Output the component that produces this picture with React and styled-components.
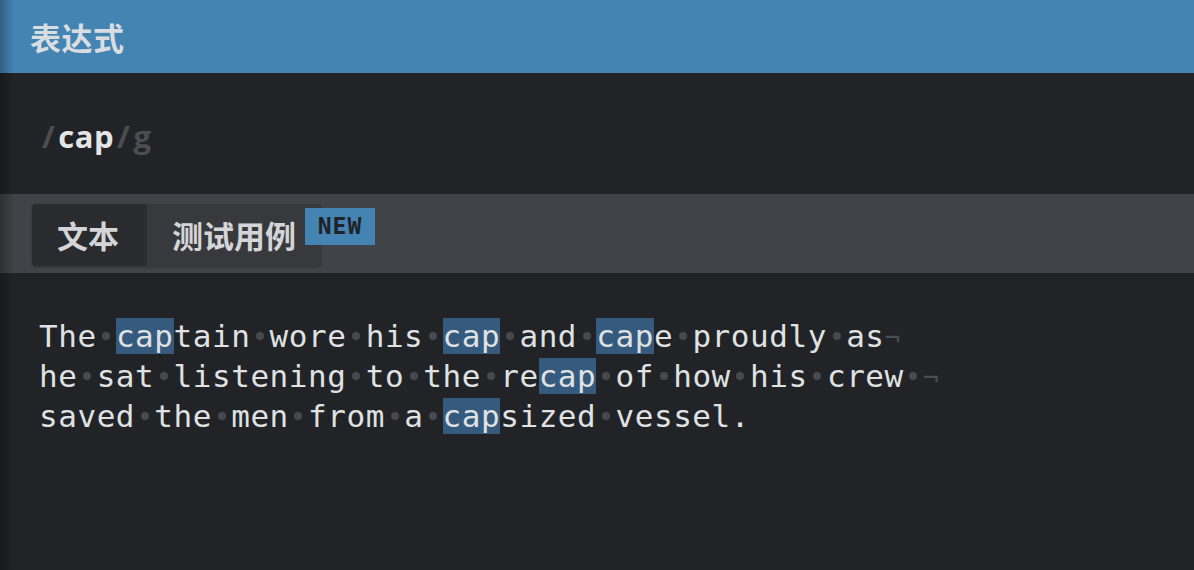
import { Fragment } from "react";
import styled, { createGlobalStyle } from "styled-components";

const GlobalStyle = createGlobalStyle`
  html, body {
    margin: 0;
    padding: 0;
    background: #222326;
  }
`;

const Page = styled.div`
  position: relative;
  width: 1194px;
  height: 570px;
  overflow: hidden;
  display: flex;
  flex-direction: column;
  background: #222326;
  font-family: "Open Sans", "Noto Sans CJK SC", sans-serif;

  /* dark shading along the left edge */
  &::before {
    content: "";
    position: absolute;
    left: 0;
    top: 0;
    bottom: 0;
    width: 14px;
    background: linear-gradient(to right, rgba(0, 0, 0, 0.28), rgba(0, 0, 0, 0));
    pointer-events: none;
    z-index: 5;
  }
`;

const Header = styled.header`
  height: 73px;
  flex-shrink: 0;
  display: flex;
  align-items: center;
  padding-left: 30px;
  background: #4484b2;
  color: #d9dde1;
  font-family: "Noto Sans CJK SC", sans-serif;
  font-size: 31px;
  font-weight: 700;
  letter-spacing: 0.5px;
`;

const Expression = styled.div`
  height: 121px;
  flex-shrink: 0;
  display: flex;
  align-items: center;
  padding-left: 39px;
  padding-top: 4px;
  box-sizing: border-box;
  font-family: "Open Sans", sans-serif;
  font-size: 31px;
  font-weight: 700;
  letter-spacing: 0.5px;
  color: #e4e5e7;
`;

const Delim = styled.span`
  color: #4a4d51;
  margin: 0 ${(p) => p.$gap || 0}px;
`;

const TabBar = styled.div`
  height: 79px;
  flex-shrink: 0;
  display: flex;
  align-items: center;
  padding-left: 32px;
  background: #404347;
`;

const TabGroup = styled.div`
  display: flex;
  height: 62px;
  margin-top: 2px;
  border-radius: 4px;
  background: #2a2b2e;
  box-shadow: 0 1px 3px rgba(0, 0, 0, 0.25);
`;

const Tab = styled.div`
  position: relative;
  display: flex;
  align-items: center;
  padding: 0 25px;
  font-family: "Noto Sans CJK SC", sans-serif;
  font-size: 31px;
  font-weight: 700;
  color: #d3d5d8;
  background: ${(p) => (p.$active ? "#2a2b2e" : "#38393d")};
  border-left: ${(p) => (p.$active ? "none" : "3px solid #2c2d30")};
  border-radius: ${(p) => (p.$active ? "4px 0 0 4px" : "0 4px 4px 0")};
`;

const Badge = styled.span`
  position: absolute;
  top: 4px;
  right: -54px;
  width: 70px;
  height: 37px;
  display: flex;
  align-items: center;
  justify-content: center;
  background: #4484b2;
  color: #1f2226;
  font-family: "DejaVu Sans Mono", monospace;
  font-size: 23px;
  font-weight: 700;
  letter-spacing: 1px;
`;

const Editor = styled.div`
  flex: 1;
  padding: 43px 0 0 39px;
  font-family: "DejaVu Sans Mono", monospace;
  font-size: 31px;
  letter-spacing: 0.55px;
  color: #dfe1e3;
`;

const Line = styled.div`
  height: 40px;
  line-height: 40px;
  white-space: pre;
`;

const Match = styled.span`
  background: #365a7e;
`;

const Space = styled.span`
  position: relative;

  &::after {
    content: "";
    position: absolute;
    left: 50%;
    top: 50%;
    width: 8px;
    height: 8px;
    margin: -4px 0 0 -4px;
    border-radius: 50%;
    background: #46494d;
  }
`;

const Eol = styled.span`
  color: #4a4d51;
  font-size: 26px;
`;

const lines = [
  { text: "The captain wore his cap and cape proudly as", wrap: true },
  { text: "he sat listening to the recap of how his crew ", wrap: true },
  { text: "saved the men from a capsized vessel.", wrap: false },
];

// splits a line into plain text, regex matches and spaces
const renderLine = (text) => {
  const parts = text.split(/(cap| )/g).filter((p) => p !== "");
  return parts.map((part, i) => {
    if (part === "cap") return <Match key={i}>cap</Match>;
    if (part === " ") return <Space key={i}> </Space>;
    return <Fragment key={i}>{part}</Fragment>;
  });
};

export default function App() {
  return (
    <>
      <GlobalStyle />
      <Page>
        <Header>表达式</Header>
        <Expression>
          <Delim $gap={3}>/</Delim>
          cap
          <Delim $gap={3}>/</Delim>
          <Delim>g</Delim>
        </Expression>
        <TabBar>
          <TabGroup>
            <Tab $active>文本</Tab>
            <Tab>
              测试用例
              <Badge>NEW</Badge>
            </Tab>
          </TabGroup>
        </TabBar>
        <Editor>
          {lines.map((line, i) => (
            <Line key={i}>
              {renderLine(line.text)}
              {line.wrap && <Eol>¬</Eol>}
            </Line>
          ))}
        </Editor>
      </Page>
    </>
  );
}
